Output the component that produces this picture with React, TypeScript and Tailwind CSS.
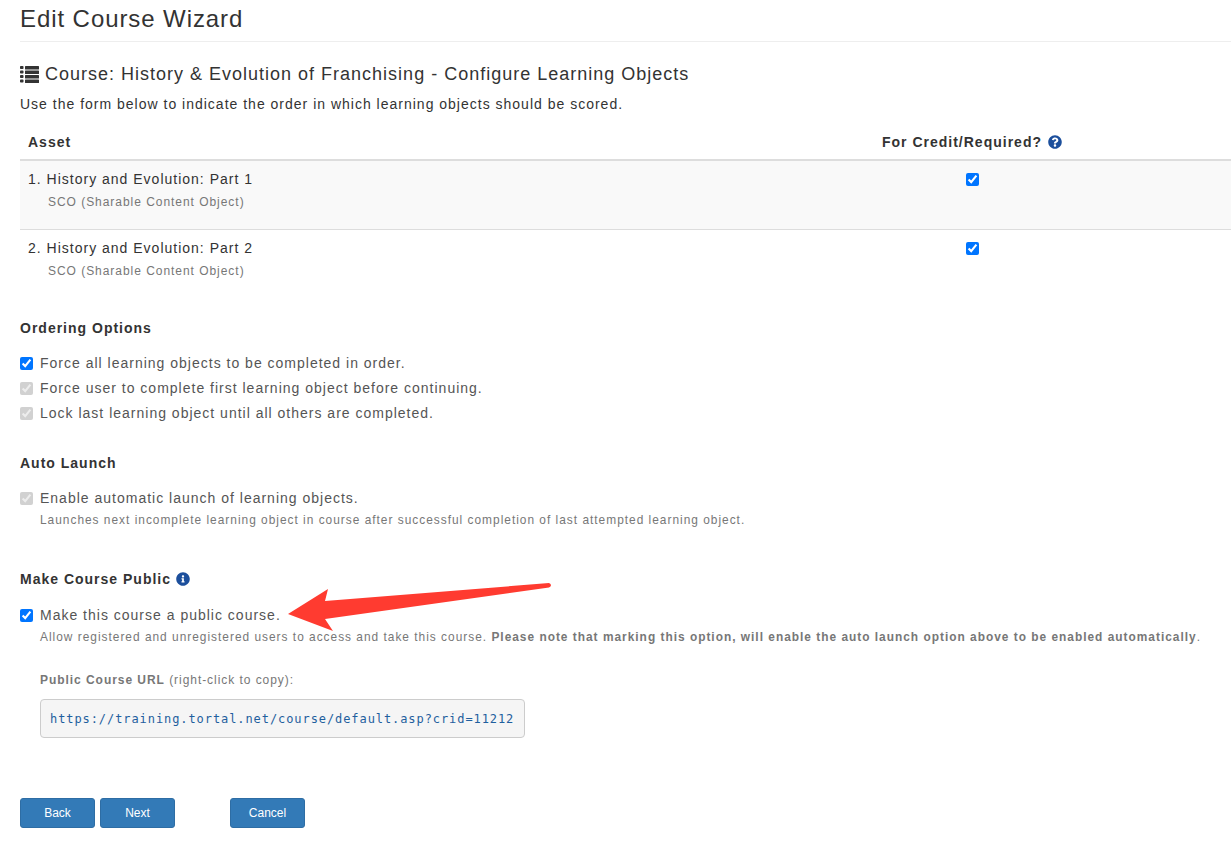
import { FaQuestionCircle, FaInfoCircle } from "react-icons/fa";

const assets = [
  { id: 1, title: "History and Evolution: Part 1", striped: true },
  { id: 2, title: "History and Evolution: Part 2", striped: false },
];

const Check = ({ disabled = false }: { disabled?: boolean }) => (
  <input
    type="checkbox"
    defaultChecked
    disabled={disabled}
    className="m-0 h-[13px] w-[13px] shrink-0 accent-[#0075ff]"
  />
);

const Option = ({ label, disabled = false }: { label: string; disabled?: boolean }) => (
  <label className="flex h-[25px] items-center gap-[7px] text-[14px] text-[#555]">
    <Check disabled={disabled} />
    <span>{label}</span>
  </label>
);

const Btn = ({ label }: { label: string }) => (
  <button className="h-[30px] w-[75px] rounded-[3px] border border-[#2e6da4] bg-[#337ab7] text-[12px] tracking-normal text-white">
    {label}
  </button>
);

export default function App() {
  return (
    <div className="relative h-[851px] overflow-hidden bg-white pl-5 font-['Liberation_Sans',Arial,sans-serif] tracking-[1px] text-[#333]">
      <h1 className="h-[42px] border-b border-[#eee] pt-[5px] text-[24px] leading-[28px] tracking-[0.92px] text-[#333]">Edit Course Wizard</h1>

      <h2 className="mt-5 flex h-[24px] items-center gap-[6px] text-[18px] leading-[24px] text-[#333]">
        <svg className="h-[17px] w-[19px]" viewBox="0 0 19 17" fill="currentColor">
          <rect x="0" y="0" width="3.5" height="3" rx="0.8" />
          <rect x="5" y="0" width="14" height="3.4" rx="0.5" />
          <rect x="0" y="4.6" width="3.5" height="3" rx="0.8" />
          <rect x="5" y="4.5" width="14" height="3.4" rx="0.5" />
          <rect x="0" y="9.1" width="3.5" height="3" rx="0.8" />
          <rect x="5" y="9" width="14" height="3.4" rx="0.5" />
          <rect x="0" y="13.6" width="3.5" height="3" rx="0.8" />
          <rect x="5" y="13.5" width="14" height="3.4" rx="0.5" />
        </svg>
        <span>Course: History &amp; Evolution of Franchising - Configure Learning Objects</span>
      </h2>
      <p className="mt-2 text-[14px] leading-[20px] text-[#333]">
        Use the form below to indicate the order in which learning objects should be scored.
      </p>

      <div className="mt-[10px]">
        <div className="flex h-[37px] items-center border-b-2 border-[#ddd] pt-[2px] text-[14px] font-bold">
          <div className="w-[693px] pl-2">Asset</div>
          <div className="flex flex-1 items-center justify-center gap-[6px]">
            <span>For Credit/Required?</span>
            <FaQuestionCircle className="h-[14px] w-[14px] -translate-y-px text-[#1c4f9c]" />
          </div>
        </div>
        {assets.map((a) => (
          <div key={a.id} className={`flex h-[69px] border-b border-[#ddd] ${a.striped ? "bg-[#f9f9f9]" : "border-transparent bg-white"}`}>
            <div className="w-[693px] pl-2 pt-2">
              <div className="text-[14px] leading-[20px]">
                {a.id}. {a.title}
              </div>
              <div className="mt-[5px] pl-5 text-[12px] leading-[17px] tracking-[0.96px] text-[#777]">SCO (Sharable Content Object)</div>
            </div>
            <div className="flex flex-1 justify-center pt-[12px]">
              <Check />
            </div>
          </div>
        ))}
      </div>

      <h3 className="mt-[19px] text-[14px] font-bold leading-[20px]">Ordering Options</h3>
      <div className="mt-[13px]">
        <Option label="Force all learning objects to be completed in order." />
        <Option label="Force user to complete first learning object before continuing." disabled />
        <Option label="Lock last learning object until all others are completed." disabled />
      </div>

      <h3 className="mt-[27px] text-[14px] font-bold leading-[20px]">Auto Launch</h3>
      <div className="mt-[13px]">
        <Option label="Enable automatic launch of learning objects." disabled />
        <p className="-mt-px pl-5 text-[11.9px] leading-[20px] text-[#777]">
          Launches next incomplete learning object in course after successful completion of last attempted learning object.
        </p>
      </div>

      <h3 className="mt-[39px] flex items-center gap-[5px] text-[14px] font-bold leading-[20px]">
        <span>Make Course Public</span>
        <FaInfoCircle className="h-[14px] w-[14px] text-[#1c4f9c]" />
      </h3>
      <div className="mt-[14px]">
        <Option label="Make this course a public course." />
        <p className="-mt-px pl-5 text-[11.9px] leading-[20px] text-[#777]">
          Allow registered and unregistered users to access and take this course.{" "}
          <b>Please note that marking this option, will enable the auto launch option above to be enabled automatically</b>.
        </p>
      </div>

      <div className="mt-[25px] pl-5">
        <p className="text-[12px] leading-[17px] tracking-[0.95px] text-[#777]">
          <b>Public Course URL</b> (right-click to copy):
        </p>
        <pre className="mt-[10px] inline-block h-[39px] w-[485px] rounded-[4px] border border-[#ccc] bg-[#f5f5f5] pl-[9px] font-['DejaVu_Sans_Mono',monospace] text-[12px] leading-[38px] tracking-[0.92px] text-[#1f5f9e]">
          https://training.tortal.net/course/default.asp?crid=11212
        </pre>
      </div>

      <div className="mt-[60px] flex">
        <Btn label="Back" />
        <div className="ml-[5px]">
          <Btn label="Next" />
        </div>
        <div className="ml-[55px]">
          <Btn label="Cancel" />
        </div>
      </div>

      {/* annotation arrow */}
      <svg className="absolute left-0 top-0 h-[851px] w-[1231px]" viewBox="0 0 1231 851" fill="none">
        <path d="M288 614 L328 589 L325 601 L549 583 Q553 585 549 587.5 L325 619 L333 631 Z" fill="#ff3b30" />
      </svg>
    </div>
  );
}
